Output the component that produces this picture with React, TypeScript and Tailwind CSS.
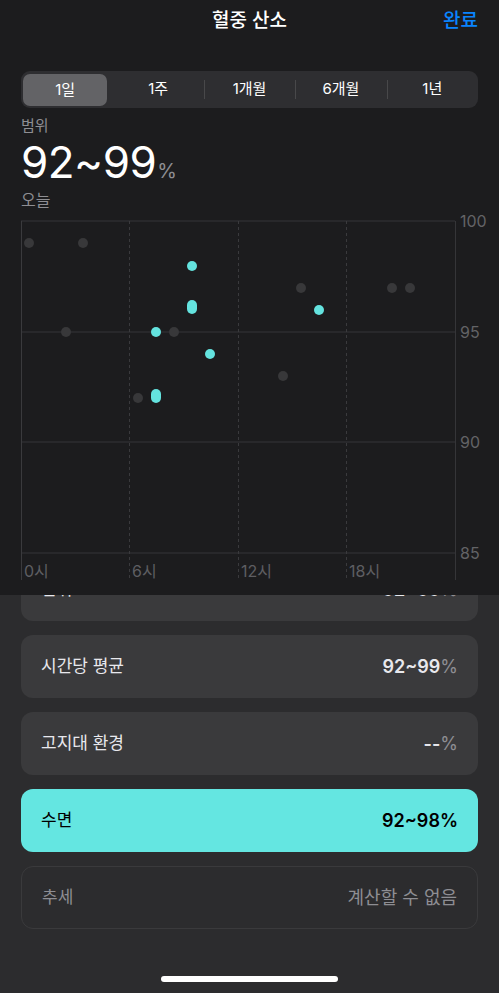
import React from "react";

const FONT = { fontFamily: 'Inter, "Noto Sans CJK KR", sans-serif' };

const SEGMENTS = ["1일", "1주", "1개월", "6개월", "1년"];

// page coords, chart spans x 21..455, y 221 (100) .. 553 (85)
const GRAY_DOTS: [number, number][] = [
  [29, 243],
  [83, 243],
  [66, 332],
  [174, 332],
  [138, 398],
  [301, 288],
  [283, 376],
  [392, 288],
  [410, 288],
];

const CYAN_DOTS: { x: number; y1: number; y2: number }[] = [
  { x: 192, y1: 266, y2: 266 },
  { x: 192, y1: 305, y2: 309 },
  { x: 156, y1: 332, y2: 332 },
  { x: 210, y1: 354, y2: 354 },
  { x: 319, y1: 310, y2: 310 },
  { x: 156, y1: 394, y2: 398 },
];

function Chart() {
  const hLines = [
    { y: 221, label: "100" },
    { y: 332, label: "95" },
    { y: 442, label: "90" },
    { y: 553, label: "85" },
  ];
  const xTicks = [
    { x: 21, label: "0시", dashed: false },
    { x: 129, label: "6시", dashed: true },
    { x: 238, label: "12시", dashed: true },
    { x: 346, label: "18시", dashed: true },
  ];
  return (
    <svg width={499} height={383} viewBox="0 212 499 383" className="block">
      {hLines.map((l) => (
        <g key={l.y}>
          <line x1={21} x2={455} y1={l.y} y2={l.y} stroke="#353538" strokeWidth={1} />
          <text x={460} y={l.y + 6} fill="#636366" fontSize={16} style={FONT}>
            {l.label}
          </text>
        </g>
      ))}
      {xTicks.map((t) => (
        <g key={t.x}>
          <line
            x1={t.x + 0.5}
            x2={t.x + 0.5}
            y1={221}
            y2={580}
            stroke="#3a3a3d"
            strokeWidth={1}
            strokeDasharray={t.dashed ? "3 3" : undefined}
          />
          <text x={t.x + 3} y={577} fill="#5e5e62" fontSize={16} style={FONT}>
            {t.label}
          </text>
        </g>
      ))}
      <line x1={455.5} x2={455.5} y1={221} y2={580} stroke="#353538" strokeWidth={1} />
      {GRAY_DOTS.map(([x, y], i) => (
        <circle key={i} cx={x} cy={y} r={5} fill="#38383a" />
      ))}
      {CYAN_DOTS.map((d, i) => (
        <line
          key={i}
          x1={d.x}
          x2={d.x}
          y1={d.y1}
          y2={d.y2 + 0.01}
          stroke="#64e3df"
          strokeWidth={10}
          strokeLinecap="round"
        />
      ))}
    </svg>
  );
}

function Row({
  label,
  value,
  unit,
  variant = "default",
}: {
  label: string;
  value: string;
  unit?: string;
  variant?: "default" | "accent" | "outline";
}) {
  const box =
    variant === "accent"
      ? "bg-[#64e6e1] text-black"
      : variant === "outline"
        ? "border border-[#3a3a3c] text-[#8e8e93]"
        : "bg-[#3a3a3c] text-[#e8e8ed]";
  return (
    <div className={`h-[63px] shrink-0 rounded-[12px] px-5 flex items-center justify-between ${box}`}>
      <span className="text-[17px]">{label}</span>
      <span className={`text-[18px] ${variant === "outline" ? "" : "font-semibold"}`}>
        {value}
        {unit && (
          <span className={`font-normal ${variant === "accent" ? "" : "text-[#8e8e93]"}`}>{unit}</span>
        )}
      </span>
    </div>
  );
}

export default function App() {
  return (
    <div className="w-[499px] h-[993px] overflow-hidden bg-[#2c2c2e] flex flex-col" style={FONT}>
      {/* header panel, sits over the scrolled list */}
      <div className="h-[595px] shrink-0 bg-[#1c1c1e] relative z-10 flex flex-col">
        <div className="h-[42px] relative flex items-center justify-center">
          <h1 className="text-[19px] font-medium text-white">혈중 산소</h1>
          <button className="absolute right-[21px] text-[19px] font-medium text-[#0a84ff]">완료</button>
        </div>

        <div className="mx-[21px] mt-[29px] h-[37px] rounded-[9px] bg-[#2e2e31] grid grid-cols-5 items-center">
          {SEGMENTS.map((s, i) =>
            i === 0 ? (
              <div
                key={s}
                className="ml-[2px] mr-[5px] mt-[1px] h-[32px] rounded-[7px] bg-[#636366] flex items-center justify-center text-[15px] text-white"
              >
                {s}
              </div>
            ) : (
              <div key={s} className="relative h-full flex items-center justify-center text-[15px] text-white">
                {i > 1 && <span className="absolute left-0 top-[9px] h-[19px] w-px bg-[#48484a]" />}
                {s}
              </div>
            ),
          )}
        </div>

        <div className="px-[21px] mt-[8px] text-[15px] leading-[20px] text-[#8e8e93]">범위</div>
        <div className="px-[21px] mt-[4px] flex items-baseline leading-none">
          <span className="text-[44px] font-normal text-white tracking-[-0.5px]">92~99</span>
          <span className="text-[20px] text-[#8e8e93] ml-[1px]">%</span>
        </div>
        <div className="px-[21px] mt-[6px] text-[16px] leading-[20px] text-[#8e8e93]">오늘</div>

        <div className="mt-auto">
          <Chart />
        </div>
      </div>

      {/* scrolled list */}
      <div className="flex-1 overflow-hidden flex flex-col gap-[14px] px-[21px]">
        <div className="-mt-[37px]">
          <Row label="범위" value="92~99" unit="%" />
        </div>
        <Row label="시간당 평균" value="92~99" unit="%" />
        <Row label="고지대 환경" value="--" unit="%" />
        <Row label="수면" value="92~98%" variant="accent" />
        <Row label="추세" value="계산할 수 없음" variant="outline" />
        <div className="mt-auto mb-[11px] flex justify-center">
          <div className="w-[177px] h-[6px] rounded-full bg-white" />
        </div>
      </div>
    </div>
  );
}
